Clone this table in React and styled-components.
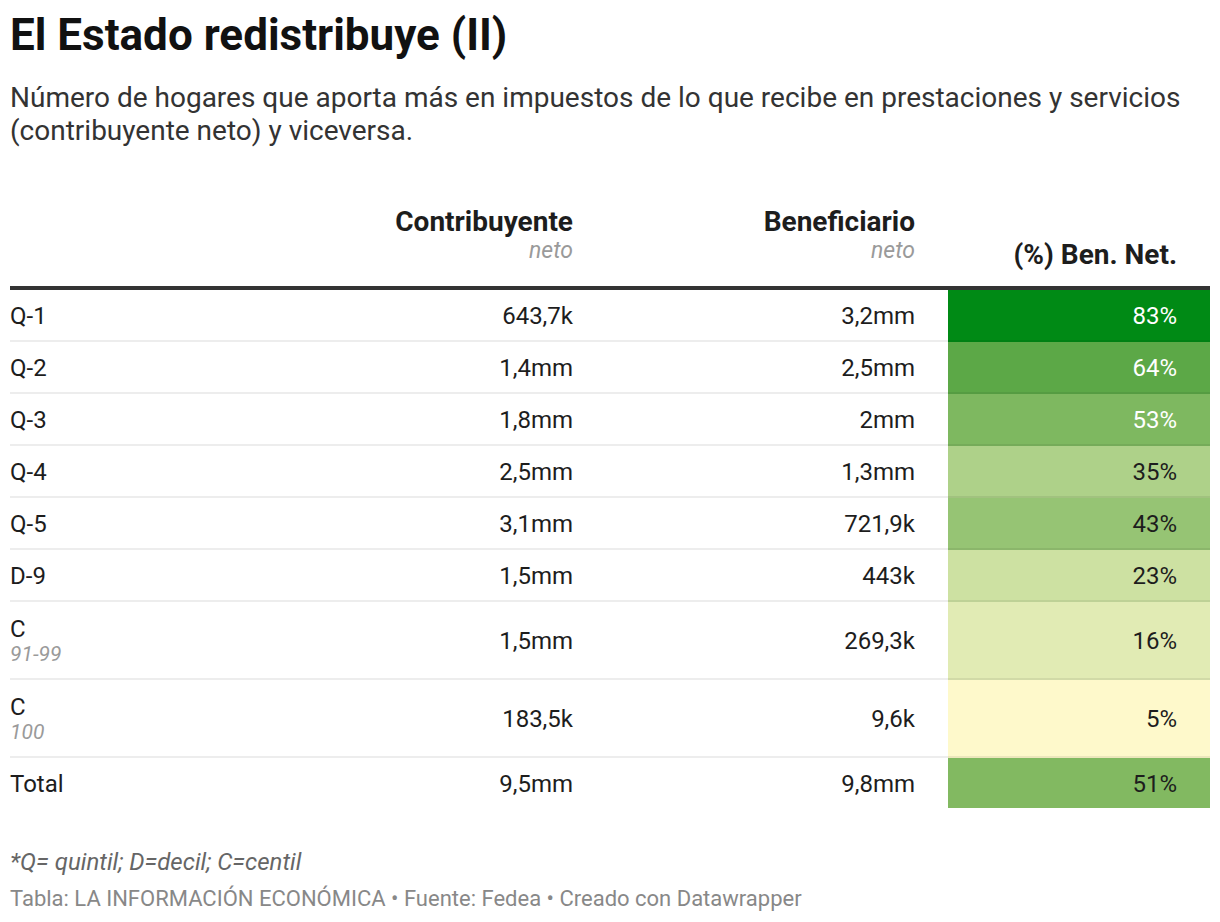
import React from "react"
import styled, { createGlobalStyle } from "styled-components"

const GlobalStyle = createGlobalStyle`
  body {
    margin: 0;
    background: #ffffff;
    font-family: Roboto, "Liberation Sans", sans-serif;
    color: #1d1d1d;
  }
`

const rows = [
  { label: "Q-1", contrib: "643,7k", benef: "3,2mm", pct: "83%", bg: "#008a15", light: true },
  { label: "Q-2", contrib: "1,4mm", benef: "2,5mm", pct: "64%", bg: "#5ca847", light: true },
  { label: "Q-3", contrib: "1,8mm", benef: "2mm", pct: "53%", bg: "#7eb860", light: true },
  { label: "Q-4", contrib: "2,5mm", benef: "1,3mm", pct: "35%", bg: "#aed189" },
  { label: "Q-5", contrib: "3,1mm", benef: "721,9k", pct: "43%", bg: "#96c474" },
  { label: "D-9", contrib: "1,5mm", benef: "443k", pct: "23%", bg: "#cde1a2" },
  { label: "C", sub: "91-99", contrib: "1,5mm", benef: "269,3k", pct: "16%", bg: "#e1ebb4" },
  { label: "C", sub: "100", contrib: "183,5k", benef: "9,6k", pct: "5%", bg: "#fef9cb" },
  { label: "Total", contrib: "9,5mm", benef: "9,8mm", pct: "51%", bg: "#82b961", last: true },
]

const App = () => {
  return (
    <Wrap>
      <GlobalStyle />
      <Title>El Estado redistribuye (II)</Title>
      <Subtitle>
        Número de hogares que aporta más en impuestos de lo que recibe en prestaciones y servicios
        (contribuyente neto) y viceversa.
      </Subtitle>
      <Table>
        <HeadRow>
          <HeadCell />
          <HeadCell $right>
            <HeadTitle>Contribuyente</HeadTitle>
            <HeadSub>neto</HeadSub>
          </HeadCell>
          <HeadCell $right>
            <HeadTitle>Beneficiario</HeadTitle>
            <HeadSub>neto</HeadSub>
          </HeadCell>
          <HeadCell $right $solo>
            <HeadTitle>(%) Ben. Net.</HeadTitle>
          </HeadCell>
        </HeadRow>
        {rows.map((r, i) => (
          <Row key={i} $tall={!!r.sub} $last={r.last}>
            <Cell $last={r.last}>
              <Label>
                {r.label}
                {r.sub && <LabelSub>{r.sub}</LabelSub>}
              </Label>
            </Cell>
            <Cell $right $last={r.last}>{r.contrib}</Cell>
            <Cell $right $last={r.last}>{r.benef}</Cell>
            <ColorCell $right $bg={r.bg} $light={r.light} $last={r.last}>
              {r.pct}
            </ColorCell>
          </Row>
        ))}
      </Table>
      <Notes>*Q= quintil; D=decil; C=centil</Notes>
      <Source>Tabla: LA INFORMACIÓN ECONÓMICA • Fuente: Fedea • Creado con Datawrapper</Source>
    </Wrap>
  )
}

export default App

const columns = "254px 342px 342px 262px"

const Wrap = styled.div`
  padding: 9px 10px 10px;
  width: 1200px;
`
const Title = styled.h1`
  margin: 0;
  font-size: 44px;
  line-height: 52px;
  font-weight: 700;
  color: #111;
`
const Subtitle = styled.p`
  margin: 20px 0 0;
  font-size: 28px;
  line-height: 33px;
  color: #333;
  max-width: 1195px;
`
const Table = styled.div`
  margin-top: 59px;
`
const HeadRow = styled.div`
  display: grid;
  grid-template-columns: ${columns};
  border-bottom: 4px solid #333;
`
const HeadCell = styled.div`
  display: flex;
  flex-direction: column;
  justify-content: flex-end;
  align-items: ${(p) => (p.$right ? "flex-end" : "flex-start")};
  padding: 0 33px ${(p) => (p.$solo ? "15px" : "23px")} 0;
`
const HeadTitle = styled.div`
  font-size: 28px;
  line-height: 32px;
  font-weight: 700;
  color: #1d1d1d;
`
const HeadSub = styled.div`
  font-size: 23px;
  line-height: 25px;
  font-style: italic;
  color: #9a9a9a;
`
const Row = styled.div`
  display: grid;
  grid-template-columns: ${columns};
  height: ${(p) => (p.$last ? "50px" : p.$tall ? "78px" : "52px")};
`
const Cell = styled.div`
  display: flex;
  align-items: center;
  justify-content: ${(p) => (p.$right ? "flex-end" : "flex-start")};
  padding: 1px 33px 0 0;
  font-size: 24px;
  color: #1d1d1d;
  border-bottom: ${(p) => (p.$last ? "none" : "2px solid rgba(0, 0, 0, 0.07)")};
`
const ColorCell = styled(Cell)`
  background: ${(p) => p.$bg};
  color: ${(p) => (p.$light ? "#ffffff" : "#1d1d1d")};
`
const Label = styled.div`
  display: flex;
  flex-direction: column;
  line-height: 26px;
`
const LabelSub = styled.span`
  font-size: 21px;
  line-height: 24px;
  font-style: italic;
  color: #9a9a9a;
`
const Notes = styled.p`
  margin: 39px 0 0;
  font-size: 24px;
  line-height: 30px;
  font-style: italic;
  color: #666;
`
const Source = styled.p`
  margin: 8px 0 0;
  font-size: 22px;
  line-height: 28px;
  color: #888;
`
